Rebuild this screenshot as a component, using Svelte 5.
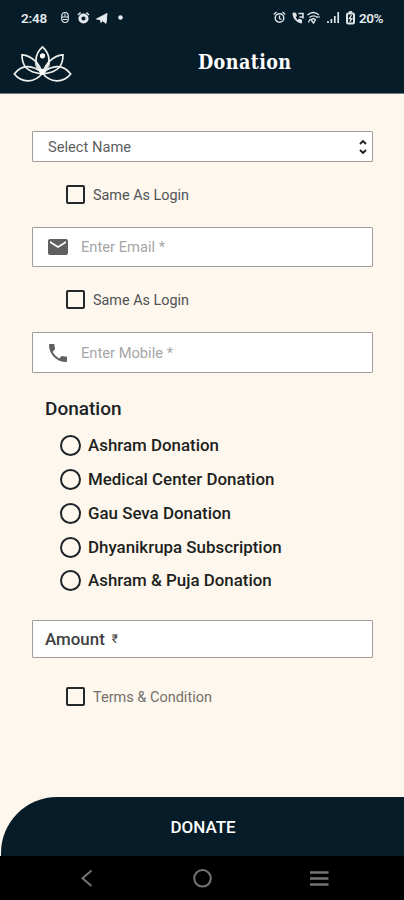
<script lang="ts">
  const causes = [
    "Ashram Donation",
    "Medical Center Donation",
    "Gau Seva Donation",
    "Dhyanikrupa Subscription",
    "Ashram & Puja Donation",
  ];

  let selected = $state("");
  let nameSameAsLogin = $state(false);
  let emailSameAsLogin = $state(false);
  let accepted = $state(false);
</script>

<div class="screen">
  <header>
    <div class="status">
      <span class="time">2:48</span>
      <svg class="left-icons" width="68" height="16" viewBox="0 0 68 16" fill="none" stroke="#e4eaed">
        <rect x="2.8" y="2.5" width="6.4" height="10" rx="3.2" stroke-width="1.2" />
        <path d="M3 7h6M6 3.5v3M4 9.5h4" />
        <circle cx="24.5" cy="8.5" r="3.6" stroke-width="3" />
        <path d="M19 5l2.6-2.5M30 5l-2.6-2.5" stroke-width="1.5" />
        <path d="M37.5 9L48 3.5 47 13.3l-3.3-2.5-1.8 1.7-.4-3z" fill="#e4eaed" />
        <circle cx="61.5" cy="7.5" r="2.3" fill="#e4eaed" stroke="none" />
      </svg>
      <svg class="right-icons" width="86" height="18" viewBox="0 0 86 18" fill="none" stroke="#dfe6e9">
        <circle cx="6.5" cy="9" r="4.3" stroke-width="1.4" />
        <path d="M.8 5.5L3.5 3M12.2 5.5L9.5 3M6.5 6.5v3l2 1" stroke-width="1.3" />
        <path d="M20 4c0 5 3 9 8.500 10v-3l-2.600-.8-1.200 1.100c-1.200-.7-2-1.900-2.400-3.200l1-1-.5-2.900z" fill="#dfe6e9" />
        <path d="M25.5 4.5h4.500v5M26.500 8h3" stroke-width="1.5" />
        <path d="M34.5 6c3.500-3 8-3 11.500 0M36.500 8.500c2.500-2 5.500-2 8 0M38 10.800c1.500-1.300 3-1.300 4.400 0L40.500 14z" stroke-width="1.4" />
        <path d="M37 10l-1.500 3.500M43.500 8h3.500" stroke-width="1.2" />
        <path d="M55 14v-2M58.400 14v-4M61.800 14V7M65.200 14V3" stroke-width="1.7" />
        <rect x="74" y="4.5" width="7" height="10" rx="1.2" stroke-width="2" />
        <path d="M75.800 3h3.400" stroke-width="1.8" />
        <path d="M78.500 6.200l-2.200 3.500h2.600L76.700 13" stroke-width="1.3" />
      </svg>
      <span class="percent">20%</span>
    </div>
    <div class="titlebar">
      <svg class="logo" width="60" height="40" viewBox="0 0 60 40" fill="none" stroke="#eef0ec" stroke-width="1.7">
        <path d="M29.5 1.8C21.5 9 20.3 19 29.5 28.5C38.7 19 37.5 9 29.5 1.8Z" />
        <path d="M29.5 29C27 19 19 10.5 9 9.8C9 20 12.5 27 29.5 29Z" />
        <path d="M29.5 29C32 19 40 10.5 50 9.8C50 20 46.5 27 29.5 29Z" />
        <path d="M29.5 28C20 20 9 18.5 1.3 29C9 38.5 22 38 29.5 28Z" />
        <path d="M29.5 28C39 20 50 18.5 57.7 29C50 38.5 37 38 29.5 28Z" />
        <path d="M29.5 28c-6-4-8-8-6.500-11M29.500 28c6-4 8-8 6.500-11" stroke-width="1" />
        <circle cx="29.5" cy="10.8" r="2.6" fill="#fff" stroke="none" />
        <circle cx="29.5" cy="26.8" r="3" fill="#fff" stroke="none" />
      </svg>
      <h1>Donation</h1>
    </div>
  </header>

  <main>
    <button class="field select" type="button">
      <span>Select Name</span>
      <svg width="10" height="18" viewBox="0 0 10 18" fill="none" stroke="#1c1c1c" stroke-width="1.8">
        <path d="M2 6L5 3l3 3M2 12L5 15l3-3" />
      </svg>
    </button>

    <label class="check">
      <input type="checkbox" bind:checked={nameSameAsLogin} />
      <span>Same As Login</span>
    </label>

    <div class="field input">
      <svg width="24" height="24" viewBox="0 0 24 24" fill="#606060">
        <path d="M20 4H4c-1.100 0-2 .9-2 2v12c0 1.100.9 2 2 2h16c1.100 0 2-.9 2-2V6c0-1.100-.9-2-2-2zm0 4l-8 5-8-5V6l8 5 8-5v2z" />
      </svg>
      <span class="placeholder">Enter Email *</span>
    </div>

    <label class="check">
      <input type="checkbox" bind:checked={emailSameAsLogin} />
      <span>Same As Login</span>
    </label>

    <div class="field input mobile">
      <svg width="24" height="24" viewBox="0 0 24 24" fill="#606060">
        <path d="M6.620 10.790c1.440 2.830 3.760 5.140 6.590 6.590l2.200-2.200c.27-.27.67-.36 1.020-.24 1.120.37 2.330.57 3.570.57.55 0 1 .45 1 1V20c0 .55-.45 1-1 1-9.390 0-17-7.610-17-17 0-.55.45-1 1-1h3.500c.55 0 1 .45 1 1 0 1.250.2 2.450.57 3.570.11.35.03.74-.25 1.020l-2.200 2.200z" />
      </svg>
      <span class="placeholder">Enter Mobile *</span>
    </div>

    <h2>Donation</h2>
    <div class="causes">
      {#each causes as cause (cause)}
        <label class="cause">
          <input type="radio" name="cause" value={cause} bind:group={selected} />
          <span>{cause}</span>
        </label>
      {/each}
    </div>

    <div class="field amount">
      <span>Amount</span>
      <small>₹</small>
    </div>

    <label class="check terms">
      <input type="checkbox" bind:checked={accepted} />
      <span>Terms &amp; Condition</span>
    </label>
  </main>

  <button class="donate" type="button">DONATE</button>

  <nav>
    <svg width="404" height="44" viewBox="0 0 404 44" fill="none" stroke="#747474" stroke-width="2">
      <path d="M91.5 14.5L82.5 22.3l9 7.7" />
      <circle cx="202.5" cy="22.3" r="8.3" />
      <path d="M310 16.5h18.500M310 22.500h18.500M310 28.500h18.500" stroke-width="2.5" />
    </svg>
  </nav>
</div>

<style>
  :global(body) {
    margin: 0;
    background: #fef7ed;
  }

  .screen {
    display: flex;
    flex-direction: column;
    width: 404px;
    height: 900px;
    overflow: hidden;
    background: #fef7ed;
    color: #222;
    font-family: Roboto, "Liberation Sans", sans-serif;
  }

  header {
    box-sizing: border-box;
    height: 94px;
    background: #061c29;
    border-bottom: 1px solid #6e7980;
    color: #fff;
  }

  .status {
    display: flex;
    align-items: center;
    height: 36px;
    padding: 0 20px 0 21px;
    font-size: 13.5px;
    font-weight: 600;
    color: #e4eaed;
  }
  .time { width: 38px; letter-spacing: -0.2px; }
  .right-icons { margin-left: auto; }
  .percent {
    width: 25px;
    letter-spacing: -0.4px;
    white-space: nowrap;
  }

  .titlebar {
    display: flex;
    align-items: center;
    height: 57px;
  }
  .logo { margin-left: 13px; }

  h1 {
    margin: 0 0 3px 125px;
    font-family: "DejaVu Serif Condensed", "DejaVu Serif", serif;
    font-size: 19.5px;
    font-stretch: condensed;
    font-weight: 700;
    line-height: 24px;
    letter-spacing: 0.4px;
  }

  main {
    display: flex;
    flex-direction: column;
    flex: 1;
    padding: 37px 31px 0 32px;
  }

  .field {
    display: flex;
    align-items: center;
    box-sizing: border-box;
    width: 341px;
    border: 1px solid #a09c98;
    border-radius: 1px;
    background: #fff;
  }

  .select {
    justify-content: space-between;
    height: 31px;
    padding: 0 4px 0 15px;
    font: 400 14.7px Roboto, "Liberation Sans", sans-serif;
    color: #606060;
  }

  .input {
    height: 40px;
    padding-left: 13px;
    gap: 11px;
  }
  .mobile { height: 41px; }

  .placeholder {
    font-size: 14.7px;
    color: #a6a6a6;
  }

  .check {
    display: flex;
    align-items: center;
    height: 65px;
    padding-left: 34px;
    gap: 8px;
    font-size: 14.4px;
    color: #505356;
  }
  .check span { padding-top: 2px; }

  input {
    appearance: none;
    flex-shrink: 0;
    box-sizing: border-box;
    margin: 0;
    border: 2px solid #24282b;
  }
  input[type="checkbox"] {
    width: 19px;
    height: 19px;
    border-radius: 2px;
  }
  input[type="radio"] {
    width: 21px;
    height: 21px;
    border-color: #1c242a;
    border-radius: 50%;
  }
  input:checked {
    background: #061c29;
    box-shadow: inset 0 0 0 3px #fef7ed;
  }

  h2 {
    margin: 24px 0 0 13px;
    font-size: 19px;
    font-weight: 500;
    line-height: 24px;
    color: #1b2329;
  }

  .causes {
    margin-top: 8px;
    padding-left: 28px;
  }

  .cause {
    display: flex;
    align-items: center;
    height: 33.75px;
    gap: 7px;
    font-size: 16.9px;
    font-weight: 500;
    line-height: 19px;
    color: #1d1f20;
  }

  .amount {
    height: 38px;
    margin-top: 22px;
    padding-left: 12px;
    gap: 7px;
    font-size: 16.9px;
    font-weight: 500;
    color: #404040;
  }
  .amount small { font-size: 12px; font-weight: 400; }

  .terms {
    height: 77px;
    font-size: 14.5px;
    color: #74706c;
  }

  .donate {
    height: 59px;
    flex-shrink: 0;
    margin-left: 1px;
    padding: 0 0 0 1px;
    border: 0;
    border-radius: 56px 0 0 0;
    background: #061c29;
    color: #fff;
    font: 500 17px Roboto, "Liberation Sans", sans-serif;
  }

  nav {
    height: 44px;
    flex-shrink: 0;
    background: #000;
  }
</style>
